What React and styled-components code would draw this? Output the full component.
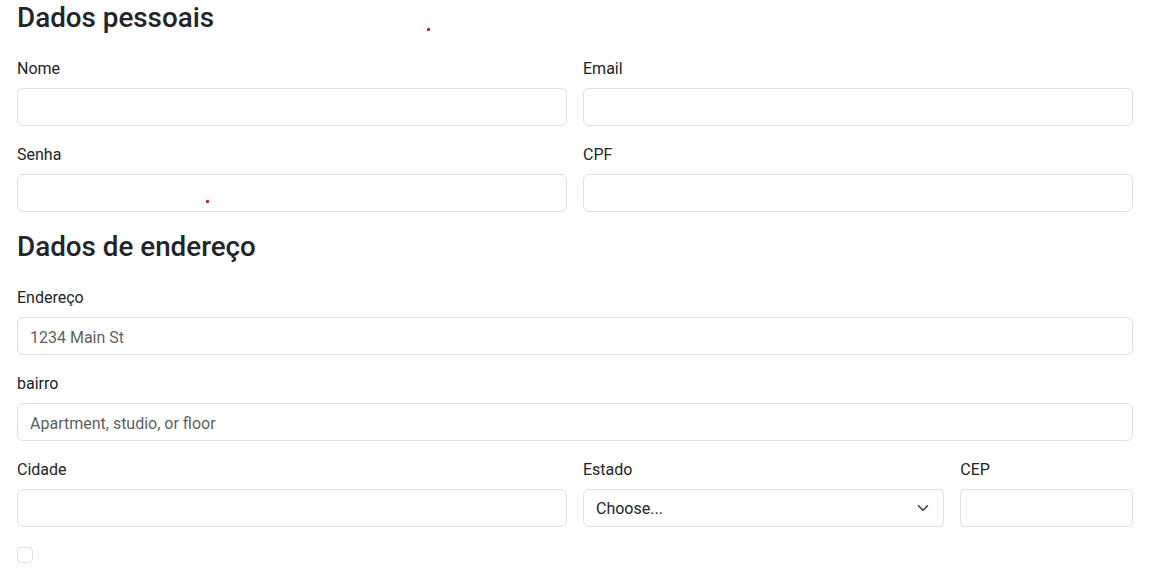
import React from "react";
import styled, { createGlobalStyle } from "styled-components";

const GlobalStyle = createGlobalStyle`
  html, body { margin: 0; padding: 0; background: #fff; }
  body {
    font-family: Roboto, "Liberation Sans", Arial, sans-serif;
    font-size: 16px;
    line-height: 1.5;
    color: #212529;
  }
  *, *::before, *::after { box-sizing: border-box; }
`;

const Page = styled.div`
  position: relative;
  width: 1167px;
  min-height: 568px;
  padding: 0 34px 0 17px;
  overflow: hidden;
`;

const Form = styled.form`
  display: grid;
  grid-template-columns: repeat(12, minmax(0, 1fr));
  column-gap: 16px;
  row-gap: 16px;
  margin-top: -1.5px;
`;

const SectionTitle = styled.h3`
  grid-column: span 12;
  margin: 0 0 6px;
  padding-top: 2px;
  font-size: 27.8px;
  font-weight: 500;
  line-height: 1.2;
  color: #212529;
`;

const Field = styled.div`
  grid-column: span ${(p) => p.$span || 12};
  min-width: 0;
`;

const Label = styled.label`
  display: block;
  margin-bottom: 7px;
  padding-top: 1px;
  font-size: 16px;
  line-height: 24px;
  color: #212529;
`;

const Input = styled.input`
  display: block;
  width: 100%;
  height: 38px;
  padding: 7px 12px 5px;
  font-family: inherit;
  font-size: 16px;
  line-height: 24px;
  color: #212529;
  background: #fff;
  border: 1px solid #dee2e6;
  border-radius: 6px;
  outline: none;
  &::placeholder { color: rgba(33, 37, 41, 0.75); opacity: 1; }
`;

const SelectWrap = styled.div`
  position: relative;
`;

const Select = styled.select`
  display: block;
  width: 100%;
  height: 38px;
  padding: 7px 36px 5px 12px;
  font-family: inherit;
  font-size: 16px;
  line-height: 24px;
  color: #212529;
  background: #fff;
  border: 1px solid #dee2e6;
  border-radius: 6px;
  appearance: none;
  -webkit-appearance: none;
  outline: none;
`;

const Chevron = styled.svg`
  position: absolute;
  right: 13px;
  top: 50%;
  width: 16px;
  height: 12px;
  margin-top: -6px;
  pointer-events: none;
`;

const CheckRow = styled.div`
  grid-column: span 12;
  min-height: 24px;
  padding-top: 4px;
`;

const Checkbox = styled.input`
  display: block;
  width: 16px;
  height: 16px;
  margin: 0;
  appearance: none;
  -webkit-appearance: none;
  background: #fff;
  border: 1px solid #dee2e6;
  border-radius: 4px;
`;

const Dot = styled.span`
  position: absolute;
  width: 3px;
  height: 3px;
  border-radius: 1px;
  background: #e8111b;
`;

export default function App() {
  return (
    <>
      <GlobalStyle />
      <Page>
        <Form onSubmit={(e) => e.preventDefault()}>
          <SectionTitle>Dados pessoais</SectionTitle>
          <Field $span={6}>
            <Label htmlFor="nome">Nome</Label>
            <Input id="nome" type="text" />
          </Field>
          <Field $span={6}>
            <Label htmlFor="email">Email</Label>
            <Input id="email" type="email" />
          </Field>
          <Field $span={6}>
            <Label htmlFor="senha">Senha</Label>
            <Input id="senha" type="password" />
          </Field>
          <Field $span={6}>
            <Label htmlFor="cpf">CPF</Label>
            <Input id="cpf" type="text" />
          </Field>

          <SectionTitle>Dados de endereço</SectionTitle>
          <Field $span={12}>
            <Label htmlFor="endereco">Endereço</Label>
            <Input id="endereco" type="text" placeholder="1234 Main St" />
          </Field>
          <Field $span={12}>
            <Label htmlFor="bairro">bairro</Label>
            <Input id="bairro" type="text" placeholder="Apartment, studio, or floor" />
          </Field>
          <Field $span={6}>
            <Label htmlFor="cidade">Cidade</Label>
            <Input id="cidade" type="text" />
          </Field>
          <Field $span={4}>
            <Label htmlFor="estado">Estado</Label>
            <SelectWrap>
              <Select id="estado" defaultValue="">
                <option value="">Choose...</option>
                <option>...</option>
              </Select>
              <Chevron viewBox="0 0 16 16">
                <path
                  d="m2 5 6 6 6-6"
                  fill="none"
                  stroke="#343a40"
                  strokeWidth="2"
                  strokeLinecap="round"
                  strokeLinejoin="round"
                />
              </Chevron>
            </SelectWrap>
          </Field>
          <Field $span={2}>
            <Label htmlFor="cep">CEP</Label>
            <Input id="cep" type="text" />
          </Field>
          <CheckRow>
            <Checkbox type="checkbox" aria-label="check" />
          </CheckRow>
        </Form>
        <Dot style={{ left: 427, top: 28 }} />
        <Dot style={{ left: 206, top: 200 }} />
      </Page>
    </>
  );
}
